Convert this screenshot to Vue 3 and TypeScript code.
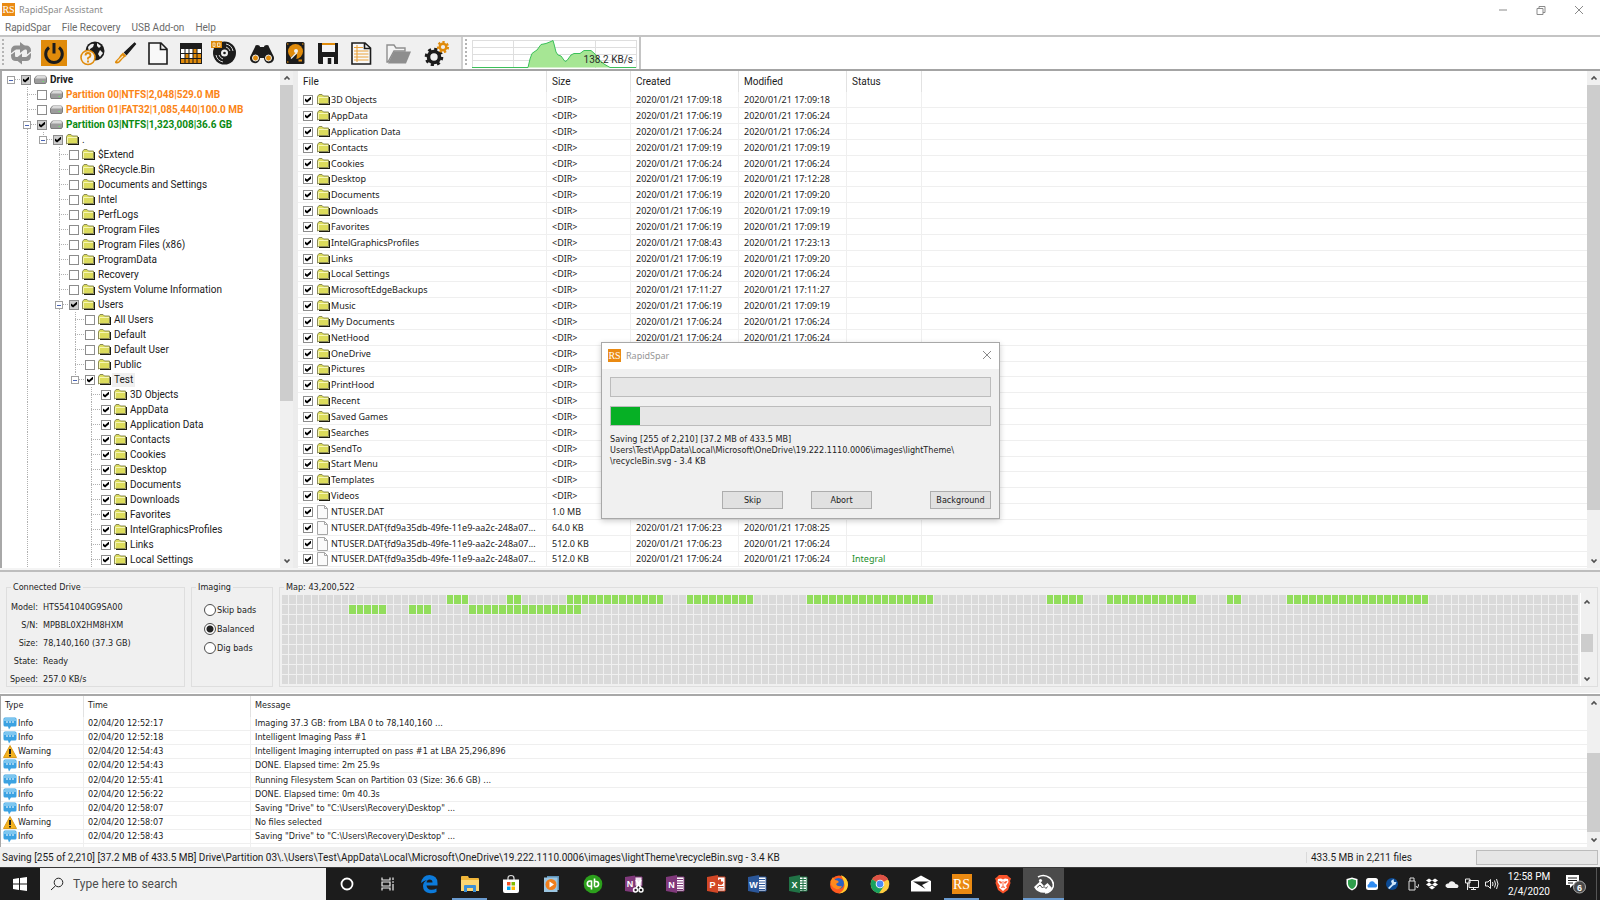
<script setup lang="ts">
import { h, ref, type FunctionalComponent } from 'vue'

interface TreeNode {
  level: number
  name: string
  state: 'on' | 'off' | 'part'
  open?: boolean
  last?: boolean
  tone?: 'drive' | 'pending' | 'done'
  current?: boolean
}

const leaf = (level: number, state: 'on' | 'off', names: string[]): TreeNode[] =>
  names.map((name) => ({ level, name, state }))

const tree = ref<TreeNode[]>([
  { level: 0, name: 'Drive', state: 'part', open: true, tone: 'drive' },
  { level: 1, name: 'Partition 00|NTFS|2,048|529.0 MB', state: 'off', tone: 'pending' },
  { level: 1, name: 'Partition 01|FAT32|1,085,440|100.0 MB', state: 'off', tone: 'pending' },
  { level: 1, name: 'Partition 03|NTFS|1,323,008|36.6 GB', state: 'part', open: true, tone: 'done' },
  { level: 2, name: '.', state: 'part', open: true, last: true },
  ...leaf(3, 'off', [
    '$Extend', '$Recycle.Bin', 'Documents and Settings', 'Intel', 'PerfLogs', 'Program Files',
    'Program Files (x86)', 'ProgramData', 'Recovery', 'System Volume Information',
  ]),
  { level: 3, name: 'Users', state: 'part', open: true },
  ...leaf(4, 'off', ['All Users', 'Default', 'Default User', 'Public']),
  { level: 4, name: 'Test', state: 'on', open: true, last: true, current: true },
  ...leaf(5, 'on', [
    '3D Objects', 'AppData', 'Application Data', 'Contacts', 'Cookies', 'Desktop', 'Documents',
    'Downloads', 'Favorites', 'IntelGraphicsProfiles', 'Links', 'Local Settings',
  ]),
])

interface FileRow {
  name: string
  size: string
  created: string
  modified: string
  status: string
}

const dir = (name: string, created: string, modified: string): FileRow => ({
  name, size: '<DIR>', created: `2020/01/21 ${created}`, modified: `2020/01/21 ${modified}`, status: '',
})
const longName = 'NTUSER.DAT{fd9a35db-49fe-11e9-aa2c-248a07...'
const files: FileRow[] = [
  dir('3D Objects', '17:09:18', '17:09:18'),
  dir('AppData', '17:06:19', '17:06:24'),
  dir('Application Data', '17:06:24', '17:06:24'),
  dir('Contacts', '17:09:19', '17:09:19'),
  dir('Cookies', '17:06:24', '17:06:24'),
  dir('Desktop', '17:06:19', '17:12:28'),
  dir('Documents', '17:06:19', '17:09:20'),
  dir('Downloads', '17:06:19', '17:09:19'),
  dir('Favorites', '17:06:19', '17:09:19'),
  dir('IntelGraphicsProfiles', '17:08:43', '17:23:13'),
  dir('Links', '17:06:19', '17:09:20'),
  dir('Local Settings', '17:06:24', '17:06:24'),
  dir('MicrosoftEdgeBackups', '17:11:27', '17:11:27'),
  dir('Music', '17:06:19', '17:09:19'),
  dir('My Documents', '17:06:24', '17:06:24'),
  dir('NetHood', '17:06:24', '17:06:24'),
  ...['OneDrive', 'Pictures', 'PrintHood', 'Recent', 'Saved Games', 'Searches', 'SendTo', 'Start Menu', 'Templates', 'Videos']
    .map((name) => ({ name, size: '<DIR>', created: '', modified: '', status: '' })),
  { name: 'NTUSER.DAT', size: '1.0 MB', created: '', modified: '', status: '' },
  { name: longName, size: '64.0 KB', created: '2020/01/21 17:06:23', modified: '2020/01/21 17:08:25', status: '' },
  { name: longName, size: '512.0 KB', created: '2020/01/21 17:06:23', modified: '2020/01/21 17:06:24', status: '' },
  { name: longName, size: '512.0 KB', created: '2020/01/21 17:06:24', modified: '2020/01/21 17:06:24', status: 'Integral' },
]

const driveInfo: [string, string][] = [
  ['Model:', 'HTS541040G9SA00'],
  ['S/N:', 'MPBBL0X2HM8HXM'],
  ['Size:', '78,140,160 (37.3 GB)'],
  ['State:', 'Ready'],
  ['Speed:', '257.0 KB/s'],
]

const modes = ['Skip bads', 'Balanced', 'Dig bads']
const mode = ref('Balanced')

const columns = 173
const runs: [number, number][][] = [
  [[22, 24], [30, 31], [38, 50], [54, 62], [70, 86], [102, 106], [110, 121], [126, 127], [134, 152]],
  [[9, 13], [17, 19], [25, 39]],
]
const cells = Array.from({ length: columns * 9 }, (_, i) => {
  const row = runs[Math.floor(i / columns)] ?? []
  const col = i % columns
  return row.some(([a, b]) => col >= a && col <= b)
})

const log: [string, string, string][] = [
  ['Info', '02/04/20 12:52:17', 'Imaging 37.3 GB: from LBA 0 to 78,140,160 ...'],
  ['Info', '02/04/20 12:52:18', 'Intelligent Imaging Pass #1'],
  ['Warning', '02/04/20 12:54:43', 'Intelligent Imaging interrupted on pass #1 at LBA 25,296,896'],
  ['Info', '02/04/20 12:54:43', 'DONE. Elapsed time: 2m 25.9s'],
  ['Info', '02/04/20 12:55:41', 'Running Filesystem Scan on Partition 03 (Size: 36.6 GB) ...'],
  ['Info', '02/04/20 12:56:22', 'DONE. Elapsed time: 0m 40.3s'],
  ['Info', '02/04/20 12:58:07', 'Saving "Drive" to "C:\\Users\\Recovery\\Desktop" ...'],
  ['Warning', '02/04/20 12:58:07', 'No files selected'],
  ['Info', '02/04/20 12:58:43', 'Saving "Drive" to "C:\\Users\\Recovery\\Desktop" ...'],
]

const office = [
  { letter: 'N', color: '#80397b', name: 'OneNote' },
  { letter: 'P', color: '#d24726', name: 'PowerPoint' },
  { letter: 'W', color: '#2b579a', name: 'Word' },
  { letter: 'X', color: '#217346', name: 'Excel' },
]

const Folder: FunctionalComponent = () =>
  h('svg', { class: 'g-folder', viewBox: '0 0 13 11', 'aria-hidden': 'true' }, [
    h('path', { d: 'M2 11V10H12V3H13V11Z', fill: '#1c1c10' }),
    h('path', { d: 'M.5 10V2.5L2 .5H5L6.5 2H11.5V9.5H1.5Z', fill: '#dcdc5c', stroke: '#8c8c58' }),
    h('path', { d: 'M1.5 9V3.5H11', fill: 'none', stroke: '#f6f6b4' }),
  ])

const Chevron: FunctionalComponent<{ up?: boolean }> = (p) =>
  h('svg', { class: 'g-chevron', viewBox: '0 0 8 8', 'aria-hidden': 'true' }, [
    h('path', { d: p.up ? 'M1.5 5.5L4 3L6.5 5.5' : 'M1.5 2.5L4 5L6.5 2.5', fill: 'none', stroke: '#505050', 'stroke-width': '1.7' }),
  ])

const ScrollBar: FunctionalComponent<{ before: number; thumb: number; after: number }> = (p) =>
  h('div', { class: 'g-scroll' }, [
    h('button', { type: 'button', 'aria-label': 'Scroll up' }, [h(Chevron, { up: true })]),
    h('div', { style: { flexGrow: p.before } }),
    h('div', { class: 'g-thumb', style: { flexGrow: p.thumb } }),
    h('div', { style: { flexGrow: p.after } }),
    h('button', { type: 'button', 'aria-label': 'Scroll down' }, [h(Chevron)]),
  ])
ScrollBar.props = ['before', 'thumb', 'after']
Chevron.props = { up: Boolean }
</script>

<template>
  <div class="desktop">
    <header class="title">
      <span class="logo">RS</span>
      <h1>RapidSpar Assistant</h1>
      <div class="controls">
        <button type="button" aria-label="Minimize"><svg viewBox="0 0 10 10"><path d="M1 5H9" /></svg></button>
        <button type="button" aria-label="Restore"><svg viewBox="0 0 10 10"><path d="M1 3.5H7V9.5H1ZM3 3.500V1.500H9V7.500H7" /></svg></button>
        <button type="button" aria-label="Close window"><svg viewBox="0 0 10 10"><path d="M1 1L9 9M9 1L1 9" /></svg></button>
      </div>
    </header>
    <nav class="menu">
      <button type="button">RapidSpar</button>
      <button type="button">File Recovery</button>
      <button type="button">USB Add-on</button>
      <button type="button">Help</button>
    </nav>

    <div class="toolbar">
      <div class="tools">
        <i class="grip"></i>
        <div class="group">
          <button type="button" aria-label="Reconnect">
            <svg viewBox="0 0 26 26"><g fill="none" stroke="#8e8e8e" stroke-width="4"><path d="M12 19H8Q5 19 5 15.500V11Q5 7.500 8 7.500H14" /><path d="M14 7.500H18Q21 7.500 21 11V15.500Q21 19 18 19H12" /></g><path d="M12 2L19 7.500L12 13ZM14 13.500L7 19L14 24.500Z" fill="#8e8e8e" /><path d="M3 14L7 11L9 14M17 13L19 15.500L23 12" fill="none" stroke="#f0f0f0" stroke-width="1.300" /></svg>
          </button>
          <button type="button" class="power" aria-label="Power">
            <svg viewBox="0 0 26 26"><path d="M8 7.500A8.300 8.300 0 1 0 18 7.500M13 3V13.500" fill="none" stroke="#1c1c1c" stroke-width="3" /></svg>
          </button>
        </div>
        <div class="group">
          <button type="button" aria-label="Diagnose">
            <svg viewBox="0 0 26 26"><circle cx="16" cy="11" r="9.500" fill="#1c1c1c" /><path d="M9 7Q12 3 15 4L14 7L11 9L10 12ZM18 3L22 6L20 8L18 6ZM21 10L24 13L21 17L19 14Z" fill="#f0f0f0" /><circle cx="9" cy="17.500" r="7" fill="#f0f0f0" stroke="#e08b0b" stroke-width="1.600" /><path d="M6.500 15.500Q6.500 13 9 13T11.500 15.500Q11.500 17 9 18V19.500M9 20.500V22.500" fill="none" stroke="#e08b0b" stroke-width="1.800" /></svg>
          </button>
          <button type="button" aria-label="Repair">
            <svg viewBox="0 0 26 26"><path d="M22.500 3L23.500 4L14.500 14.500L12.500 12.500Z" fill="#1c1c1c" stroke="#1c1c1c" stroke-width="1.200" /><path d="M11 12.500L14.500 16Q12.500 17 10.500 19Q7 24 4.500 23.500T3.500 21Q7 18 8.500 15Z" fill="#e08b0b" /><path d="M5.500 21.500L11 16" stroke="#f6e3c0" stroke-width="1.200" /></svg>
          </button>
          <button type="button" aria-label="New">
            <svg viewBox="0 0 26 26"><path d="M4 3H16L22 9V24H4ZM15.500 3V9.500H22" fill="#f8f8f8" stroke="#1c1c1c" stroke-width="1.600" /></svg>
          </button>
          <button type="button" aria-label="Map">
            <svg viewBox="0 0 26 26"><rect x="2" y="3" width="22" height="21" fill="#1c1c1c" /><path d="M3 9H23V23H3Z" fill="#fff" /><path d="M3 18H7V23H3ZM7 13H11V23H7ZM11 18H15V23H11ZM15 9H19V23H15ZM19 14H23V23H19Z" fill="#e08b0b" /><path d="M7 9V23M11 9V23M15 9V23M19 9V23M3 13.500H23M3 18.500H23" stroke="#1c1c1c" stroke-width="1" /></svg>
          </button>
          <button type="button" aria-label="Disc image">
            <svg viewBox="0 0 26 26"><circle cx="13.500" cy="13" r="11.500" fill="#1c1c1c" /><g fill="none" stroke="#d8d8d8" stroke-width="1"><path d="M15 4A9 9 0 0 1 22 11M15 7A6 6 0 0 1 19 11M12 22A9 9 0 0 1 5 15M12 19A6 6 0 0 1 8 15" /></g><circle cx="13.500" cy="13" r="3.500" fill="#f0f0f0" /><circle cx="13.500" cy="13" r="1.300" fill="#1c1c1c" /><rect x="0" y="1" width="11" height="7" fill="#e08b0b" /><path d="M2 3V6.500H4V3ZM6.500 3V6.500H9V3Z" fill="none" stroke="#f7dcb0" /></svg>
          </button>
        </div>
        <div class="group">
          <button type="button" aria-label="Find">
            <svg viewBox="0 0 26 26"><path d="M6 7Q6 5 8 5Q11 5 11 7H15Q15 5 18 5Q20 5 20 7L24.500 16A5 5 0 1 1 15 18H11A5 5 0 1 1 1.500 16Z" fill="#1c1c1c" /><circle cx="6.500" cy="18" r="3" fill="#e08b0b" stroke="#f0f0f0" /><circle cx="19.500" cy="18" r="3" fill="#e08b0b" stroke="#f0f0f0" /></svg>
          </button>
          <button type="button" aria-label="Disk">
            <svg viewBox="0 0 26 26"><rect x="4" y="2" width="18.500" height="22" rx="1.500" fill="#1c1c1c" /><circle cx="13.500" cy="11.500" r="7.500" fill="#e08b0b" /><circle cx="14" cy="11" r="2" fill="#f0f0f0" /><path d="M10 16L15 14L14.500 18.500Q12 21 8.500 19.500Z" fill="#1c1c1c" /><path d="M9 18.500L15 12.500" stroke="#f0f0f0" stroke-width="1.400" /><path d="M16.500 20.500H20" stroke="#e08b0b" stroke-width="2" /><g fill="#e08b0b"><circle cx="5.800" cy="4" r=".8" /><circle cx="20.800" cy="4" r=".8" /><circle cx="5.800" cy="22" r=".8" /></g></svg>
          </button>
          <button type="button" aria-label="Save">
            <svg viewBox="0 0 26 26"><path d="M3 3H23V24H4L3 23Z" fill="#1c1c1c" /><path d="M7 3H20V12H7ZM8 17H19V24H8Z" fill="#f4f4f4" /><path d="M7 4H20" stroke="#e08b0b" stroke-width="2" /><path d="M14.500 18V24" stroke="#1c1c1c" stroke-width="3.500" /></svg>
          </button>
          <button type="button" aria-label="Report">
            <svg viewBox="0 0 26 26"><path d="M4 3H17L22.500 8V24H4ZM16.500 3V8.500H22.500" fill="#f8f8f8" stroke="#1c1c1c" stroke-width="1.600" /><path d="M6 7.500H15M6 11H20.500M6 14H20.500M6 17H20.500M6 20H20.500M9 5V22" stroke="#eaa23a" stroke-width="1.100" /></svg>
          </button>
        </div>
        <div class="group">
          <button type="button" aria-label="Open">
            <svg viewBox="0 0 26 26"><path d="M1 5H8L10 8H19V11H8L2 22H1Z" fill="#f4f4f4" stroke="#8e8e8e" stroke-width="1.400" /><path d="M8 11.500H25L20 23.500H2Z" fill="#8e8e8e" /></svg>
          </button>
        </div>
        <div class="group">
          <button type="button" aria-label="Settings">
            <svg viewBox="0 0 26 26"><circle cx="10" cy="17" r="5.500" fill="none" stroke="#1c1c1c" stroke-width="3.600" /><circle cx="10" cy="17" r="7.800" fill="none" stroke="#1c1c1c" stroke-width="3" stroke-dasharray="3.060 3.060" /><circle cx="19" cy="7" r="3.300" fill="none" stroke="#e08b0b" stroke-width="2.400" /><circle cx="19" cy="7" r="5" fill="none" stroke="#e08b0b" stroke-width="2.200" stroke-dasharray="2.240 2.240" /></svg>
          </button>
        </div>
      </div>
      <div class="graph">
        <i class="grip"></i>
        <svg viewBox="0 0 165 30">
          <path d="M0 .5H164M0 7.500H164M0 14.500H164M0 20.500H164M41.500 0V28M123.500 0V28M164.500 0V28M.5 0V28" fill="none" stroke="#dedede" />
          <path d="M0 27.500H56L58 19L60 13.500L62 12L65 10L69 4.500L74 3.500L79 1.500L81 .5L82 4L84 12L86 15L89 16L93 21.500L95 20.500L99 15L102 13.500H108L112 10.500H119L123 14L127 20L132 24L138 27.500H164" fill="#a6e694" stroke="#3cc05a" />
          <text x="161" y="23" text-anchor="end">138.2 KB/s</text>
        </svg>
      </div>
    </div>

    <main class="work">
      <section class="tree" aria-label="Drive contents">
        <ul>
          <li v-for="(n, i) in tree" :key="i">
            <i v-for="k in n.level" :key="k" class="cell" :class="{ pass: k === 2 || k === 4 }"></i>
            <i class="cell" :class="{ elbow: n.level > 0, last: n.last, root: !n.level }"><b v-if="n.open"></b></i>
            <label :class="n.tone">
              <input type="checkbox" :checked="n.state !== 'off'" :class="{ part: n.state === 'part' }" />
              <svg v-if="n.tone" class="disk" viewBox="0 0 13 9" aria-hidden="true"><path d="M2.500 1H11.500L12.500 3V7L11.500 8.500H1L.5 7V3.500Z" fill="#9c9c9c" stroke="#6a6a6a" stroke-width=".8" /><path d="M3 1H11.500L12 3.500H1Z" fill="#dadada" /><path d="M8.500 6.500H10" stroke="#6fe06f" /></svg>
              <Folder v-else />
              <span :class="{ current: n.current }">{{ n.name }}</span>
            </label>
          </li>
        </ul>
        <ScrollBar :before="0" :thumb="315" :after="153" />
      </section>

      <section class="list">
        <div class="fill">
          <table>
            <colgroup><col class="c-file" /><col class="c-size" /><col class="c-date" /><col class="c-date" /><col class="c-status" /><col /></colgroup>
            <thead><tr><th>File</th><th>Size</th><th>Created</th><th>Modified</th><th>Status</th><th></th></tr></thead>
            <tbody>
              <tr v-for="(f, i) in files" :key="i">
                <td class="name">
                  <label>
                    <input type="checkbox" checked />
                    <Folder v-if="f.size === '<DIR>'" />
                    <svg v-else class="page" viewBox="0 0 12 14" aria-hidden="true"><path d="M.5 .5H7.500L10.500 3.500V13.500H.5ZM7.500 .5V3.500H10.500" fill="#fafafa" stroke="#a6a6a6" /></svg>
                    <span>{{ f.name }}</span>
                  </label>
                </td>
                <td>{{ f.size }}</td><td>{{ f.created }}</td><td>{{ f.modified }}</td><td class="ok">{{ f.status }}</td><td></td>
              </tr>
            </tbody>
          </table>
        </div>
        <ScrollBar :before="0" :thumb="424" :after="44" />
      </section>
    </main>

    <section class="status-pane">
      <fieldset class="info">
        <legend>Connected Drive</legend>
        <dl><template v-for="[k, v] in driveInfo" :key="k"><dt>{{ k }}</dt><dd>{{ v }}</dd></template></dl>
      </fieldset>
      <fieldset class="modes">
        <legend>Imaging</legend>
        <div class="options">
          <label v-for="m in modes" :key="m"><input v-model="mode" type="radio" name="imaging" :value="m" />{{ m }}</label>
        </div>
      </fieldset>
      <fieldset class="map">
        <legend>Map: 43,200,522</legend>
        <div class="map-row">
          <div class="blocks"><i v-for="(on, i) in cells" :key="i" :class="{ on }"></i></div>
          <ScrollBar :before="20" :thumb="14" :after="16" />
        </div>
      </fieldset>
    </section>

    <section class="log">
      <div class="fill">
        <table>
          <colgroup><col class="c-type" /><col class="c-time" /><col /></colgroup>
          <thead><tr><th>Type</th><th>Time</th><th>Message</th></tr></thead>
          <tbody>
            <tr v-for="([type, time, message], i) in log" :key="i">
              <td>
                <span class="kind">
                  <svg v-if="type === 'Info'" viewBox="0 0 14 13" aria-hidden="true"><path d="M2 .5H12Q13.500 .5 13.500 2V8Q13.500 9.500 12 9.500H8L6 12.500L5 9.500H2Q.5 9.500 .5 8V2Q.5 .5 2 .5Z" fill="#3ba2e2" /><path d="M2 1H12L13 2V4H1V2Z" fill="#7cc6f0" /><path d="M3 5H5M6 5H8M9 5H11" stroke="#fff" /></svg>
                  <svg v-else viewBox="0 0 14 13" aria-hidden="true"><path d="M7 .5L13.500 12.500H.5Z" fill="#f5b21e" stroke="#d99a1c" /><path d="M7 4V9M7 10V11.500" stroke="#222" stroke-width="2" /></svg>
                  {{ type }}
                </span>
              </td>
              <td>{{ time }}</td><td>{{ message }}</td>
            </tr>
            <tr class="rest"><td></td><td></td><td></td></tr>
          </tbody>
        </table>
      </div>
      <ScrollBar :before="44" :thumb="82" :after="1" />
    </section>

    <footer class="statusbar">
      <span class="path">Saving [255 of 2,210] [37.2 MB of 433.5 MB] Drive\Partition 03\.\Users\Test\AppData\Local\Microsoft\OneDrive\19.222.1110.0006\images\lightTheme\recycleBin.svg - 3.4 KB</span>
      <span class="total">433.5 MB in 2,211 files</span>
      <span class="slot"></span>
    </footer>

    <div class="taskbar">
      <button type="button" class="start" aria-label="Start"><svg viewBox="0 0 14 14"><path d="M0 2L6 1V6.500H0ZM7 1L14 0V6.500H7ZM0 7.500H6V13L0 12ZM7 7.500H14V14L7 13Z" fill="#fff" /></svg></button>
      <label class="search">
        <svg viewBox="0 0 14 14" aria-hidden="true"><circle cx="8.500" cy="5.500" r="4.300" /><path d="M5.500 8.800L1 13" /></svg>
        <input type="text" placeholder="Type here to search" aria-label="Search" />
      </label>
      <div class="apps">
        <button type="button" aria-label="Cortana"><svg viewBox="0 0 20 20"><circle cx="10" cy="10" r="5.500" fill="none" stroke="#fff" stroke-width="1.800" /></svg></button>
        <button type="button" aria-label="Task view"><svg viewBox="0 0 20 20"><path d="M4 3.500V6H12V3.500M4 16.500V14H12V16.500M4 8H12V12H4ZM15 3.500V6M15 10V16.500M14 8H16" fill="none" stroke="#f0f0f0" stroke-width="1.200" /></svg></button>
        <button type="button" aria-label="Edge"><svg viewBox="0 0 20 20"><path d="M2 9Q3.500 1 10.500 1Q18.500 1.500 18.500 9V11.500H7.500Q8 15.500 12 15.800Q15 16 17.500 14.500V18Q14.500 19.500 11 19.200Q4 18.500 4 12Q4 8 8 6Q5 6.500 2 9ZM7.500 8.500H13.500Q13.500 5.500 10.500 5.500Q8 5.500 7.500 8.500Z" fill="#0c7bdb" fill-rule="evenodd" /></svg></button>
        <button type="button" class="running" aria-label="File Explorer"><svg viewBox="0 0 20 20"><path d="M1 3Q1 2 2 2H8L9 4H18Q19 4 19 5V17H1Z" fill="#f0b63a" /><path d="M1 6H19V17H1Z" fill="#fcd673" /><path d="M4 18V12Q4 11 5 11H15Q16 11 16 12V18H13V14H7V18Z" fill="#3b8fd6" /></svg></button>
        <button type="button" aria-label="Store"><svg viewBox="0 0 20 20"><path d="M7 6V4Q7 1.500 10 1.500T13 4V6" fill="none" stroke="#ddd" stroke-width="1.200" /><path d="M2 5.500H18V17Q18 19 16 19H4Q2 19 2 17Z" fill="#fff" /><path d="M6 8H9.500V11.500H6Z" fill="#f25022" /><path d="M10.500 8H14V11.500H10.500Z" fill="#7fba00" /><path d="M6 12.500H9.500V16H6Z" fill="#00a4ef" /><path d="M10.500 12.500H14V16H10.500Z" fill="#ffb900" /></svg></button>
        <button type="button" aria-label="Media player"><svg viewBox="0 0 20 20"><path d="M5 2H17V16H5Z" fill="#5f93b8" /><path d="M2 3.500H15.500V18H2Z" fill="#9cc6e2" /><circle cx="9" cy="10.500" r="5.500" fill="#f07f1d" /><path d="M7.500 7.500L12 10.500L7.500 13.500Z" fill="#fff" /></svg></button>
        <button type="button" aria-label="QuickBooks"><svg viewBox="0 0 20 20"><circle cx="10" cy="10" r="9.300" fill="#2ca01c" /><g fill="none" stroke="#fff" stroke-width="1.600"><path d="M8.500 7H7A2.700 2.700 0 0 0 7 12.400H8.500V15.500V6.500M11.500 12.500V4.500V7.500H13A2.600 2.600 0 0 1 13 12.700H11.500" /></g></svg></button>
        <button type="button" aria-label="OneNote clipper"><svg viewBox="0 0 20 20"><path d="M1 3L11 1.500V18.500L1 17Z" fill="#80397b" /><path d="M11 3H18V12H11Z" fill="#f0e4ef" stroke="#80397b" /><path d="M12 6L17 14M17 6L12 14" stroke="#fff" stroke-width="1.800" /><g fill="none" stroke="#fff" stroke-width="1.400"><circle cx="11.500" cy="16" r="2" /><circle cx="17" cy="16" r="2" /></g><text x="6" y="13" class="letter">N</text></svg></button>
        <button v-for="o in office" :key="o.letter" type="button" :aria-label="o.name">
          <svg viewBox="0 0 20 20">
            <path d="M11 3H19V17H11Z" fill="#fff" :stroke="o.color" />
            <path v-if="o.letter === 'P'" d="M12 12.500H17.500M12 15H17.500M14.500 5.500A2.500 2.500 0 1 0 17 8H14.500Z" :stroke="o.color" :fill="o.color" />
            <path v-else d="M12 5.500H18M12 8H18M12 10.500H18M12 13H18M12 15.500H18" :stroke="o.color" />
            <path v-if="o.letter === 'X'" d="M15 3V17" :stroke="o.color" />
            <path d="M1 3L12 1V19L1 17Z" :fill="o.color" />
            <text x="6.500" y="13.500" class="letter">{{ o.letter }}</text>
          </svg>
        </button>
        <button type="button" aria-label="Firefox"><svg viewBox="0 0 20 20"><circle cx="10" cy="10.500" r="9" fill="#ff5a1f" /><path d="M12 1Q19 4 19 11Q18 19 10 19.500Q16 16 15.500 11Q15 6 12 1Z" fill="#ffcb2e" /><circle cx="9.500" cy="9.500" r="5.500" fill="#2a62c4" /><path d="M1.500 7Q3 5 4 3L6 6Q9 6 10 8L7 10Q8 13 13 12Q11 16 7 15Q1.500 13 1.500 7Z" fill="#ff8a1c" /></svg></button>
        <button type="button" aria-label="Chrome"><svg viewBox="0 0 20 20"><circle cx="10" cy="10" r="9.300" fill="#ffcd40" /><path d="M10 10L1.950 5.350A9.300 9.300 0 0 1 18.050 5.350Z" fill="#de5246" /><path d="M10 10L1.950 5.350A9.300 9.300 0 0 0 9 19.300L14 12Z" fill="#1aa15f" /><path d="M10 5.500H18.200A9.300 9.300 0 0 0 10 .7Z" fill="#de5246" /><circle cx="10" cy="10" r="4.300" fill="#fff" /><circle cx="10" cy="10" r="3.400" fill="#4c8bf5" /></svg></button>
        <button type="button" aria-label="Mail"><svg viewBox="0 0 20 20"><path d="M0 7L10 1.500L20 7V17.500H0Z" fill="#fff" /><path d="M2 7.500H18L11 11L14.500 15L8 11Z" fill="#1c1c1c" /></svg></button>
        <button type="button" class="running" aria-label="RapidSpar"><span class="logo big">RS</span></button>
        <button type="button" aria-label="Brave"><svg viewBox="0 0 20 20"><path d="M6 1H14L16 3L18 4.500L17 7L17.500 9L15 16L10 19.500L5 16L2.500 9L3 7L2 4.500L4 3Z" fill="#fb542b" /><path d="M5 5L8 4.500L10 5.500L12 4.500L15 5L15.500 8L13 12L14 13.500L10 17L6 13.500L7 12L4.500 8Z" fill="#fff" /><path d="M6 7.500L8.500 8L8 9.500ZM14 7.500L11.500 8L12 9.500ZM10 7V12M8 13.500L10 12.500L12 13.500" fill="#fb542b" stroke="#fb542b" stroke-width=".8" /></svg></button>
        <button type="button" class="running active" aria-label="Snip"><svg viewBox="0 0 20 20"><path d="M4 3Q10-.5 16 4Q20.500 8 19 13Q17 18.500 11 19" fill="none" stroke="#fff" stroke-width="1.600" /><circle cx="6.500" cy="6.500" r="1.600" fill="#fff" /><path d="M0 13L6 7.500L10 12L13.500 9L18 14Q16 18.800 10 18.800Q3 18.800 0 13Z" fill="#fff" /><path d="M3 13.500L6 11L8.500 14L10 12.500L12 14.500L13.500 12.500" fill="none" stroke="#4b4b4b" /></svg></button>
      </div>
      <div class="tray">
        <svg viewBox="0 0 14 14"><path d="M7 .5L12.500 2V7Q12 11.500 7 13.500Q2 11.500 1.500 7V2Z" fill="#fff" /><path d="M7 2L11 3.200V7Q10.500 10.500 7 12Q3.500 10.500 3 7V3.200Z" fill="#2f9e4c" /></svg>
        <svg viewBox="0 0 14 14"><rect x="1" y="1" width="12" height="12" rx="2.500" fill="#fff" /><path d="M3 10.500Q1.500 8 4 7Q4.500 4 7.500 4.300Q9.500 4.500 10 6.500Q12.500 7 12 9.500L11 10.500Z" fill="#2f8cf2" /></svg>
        <svg viewBox="0 0 14 14"><circle cx="7" cy="7" r="6" fill="#0b4a94" /><path d="M3 11L7 7L6 4L8.500 2L9 5L11.500 5L10.500 7.500L8 8.500L4.500 12Z" fill="#cfe6fa" /></svg>
        <svg viewBox="0 0 14 14"><path d="M5 4V1H9V4M4 4H10V13H4ZM11 9L12.500 11L14 7" fill="none" stroke="#ddd" /></svg>
        <svg viewBox="0 0 14 14"><path d="M4 1.500L7 3.500L4 5.500L1 3.500ZM10 1.500L13 3.500L10 5.500L7 3.500ZM4 5.500L7 7.500L4 9.500L1 7.500ZM10 5.500L13 7.500L10 9.500L7 7.500ZM7 8.500L10 10.500L7 12.500L4 10.500Z" fill="#fff" /></svg>
        <svg viewBox="0 0 14 14"><path d="M2.500 11Q0 10 .5 8Q1.500 6 3.500 6.500Q5 3.500 8 4.500Q10 5 10.500 7Q13.500 7 13.500 9.500L12.500 11Z" fill="#f0f0f0" /></svg>
        <svg viewBox="0 0 14 14"><path d="M4 3.500H13.500V10.500H4ZM6 12.500H11M8.500 10.500V12.500M.5 2H5V6H.5ZM2.500 6V13" fill="none" stroke="#eee" /></svg>
        <svg viewBox="0 0 14 14"><path d="M.5 5H3L5.500 2.500V11.500L3 9H.5ZM7.500 5Q8.500 7 7.500 9M9.500 3.500Q11.500 7 9.500 10.500M11.500 2Q14.500 7 11.500 12" fill="none" stroke="#eee" /></svg>
      </div>
      <time class="clock"><span>12:58 PM</span><span>2/4/2020</span></time>
      <button type="button" class="notes" aria-label="Notifications">
        <svg viewBox="0 0 20 20"><path d="M0 1H13V11H7L4 14V11H0Z" fill="#fff" /><path d="M2 4H11M2 6.500H11M2 9H7" stroke="#1c1c1c" /><circle cx="13.500" cy="13" r="6" fill="#4a4a4a" stroke="#aaa" /><text x="13.500" y="16.500" class="letter">6</text></svg>
      </button>
    </div>

    <div class="dialog" role="dialog" aria-labelledby="dlg">
      <div class="dialog-title">
        <span class="logo">RS</span><h2 id="dlg">RapidSpar</h2>
        <button type="button" aria-label="Close"><svg viewBox="0 0 10 10"><path d="M1 1L9 9M9 1L1 9" /></svg></button>
      </div>
      <div class="dialog-body">
        <div class="bar" role="progressbar" aria-label="File progress"></div>
        <div class="bar" role="progressbar" aria-label="Total progress"><i :style="{ width: '7.7%' }"></i></div>
        <p>Saving [255 of 2,210] [37.2 MB of 433.5 MB]<br />Users\Test\AppData\Local\Microsoft\OneDrive\19.222.1110.0006\images\lightTheme\<br />\recycleBin.svg - 3.4 KB</p>
        <div class="actions">
          <button type="button">Skip</button>
          <button type="button">Abort</button>
          <button type="button" class="far">Background</button>
        </div>
      </div>
    </div>
  </div>
</template>

<style>
html, body { margin: 0; }
.g-folder { width: 13px; height: 11px; flex: none; }
.g-chevron { width: 8px; height: 8px; }
.g-scroll { flex: none; width: 13px; display: flex; flex-direction: column; background: #f0f0f0; }
.g-scroll button { flex: none; height: 14px; padding: 0; border: 0; background: none; display: flex; align-items: center; justify-content: center; }
.g-thumb { background: #cdcdcd; }
</style>

<style scoped>
* { box-sizing: border-box; }
.desktop { position: relative; height: 100vh; display: flex; flex-direction: column; overflow: hidden; background: #fff; color: #1c1c1c; font: 10px "Roboto", "Open Sans", sans-serif; }
button { font: inherit; color: inherit; padding: 0; border: 0; background: none; }
h1, h2, p, ul, dl, dd { margin: 0; padding: 0; font-weight: 400; font-size: inherit; }
.logo { width: 13px; height: 13px; background: #ea8a12; color: #fff; font: 10px/14px "Liberation Serif", serif; text-align: center; }
.logo.big { width: 20px; height: 20px; font-size: 14px; line-height: 21px; }

.title { flex: none; height: 19px; display: flex; align-items: center; gap: 4px; padding-left: 2px; color: #8a8a8a; font: 9px "Noto Sans", sans-serif; }
.controls { margin-left: auto; padding-right: 2px; display: flex; }
.controls button { width: 38px; height: 16px; display: flex; align-items: center; justify-content: center; }
.controls svg, .dialog-title svg { width: 10px; height: 10px; fill: none; stroke: #8a8a8a; }
.menu { flex: none; height: 16px; display: flex; align-items: center; gap: 11px; padding-left: 5px; color: #6a6a6a; }

.toolbar { flex: none; height: 36px; display: flex; border-top: 2px solid #c4c4c4; border-bottom: 2px solid #a4a4a4; }
.tools { display: flex; align-items: center; gap: 12px; padding-right: 11px; background: #f0f0f0; border-right: 2px solid #d0d0d0; }
.grip { flex: none; width: 2px; height: 28px; margin: 0 -8px 0 2px; background: repeating-linear-gradient(#b4b4b4 0 2px, transparent 2px 4px); }
.group { display: flex; gap: 7px; }
.group button, .group svg { width: 26px; height: 26px; display: block; }
.group .power { background: #e08b0b; }
.graph { display: flex; align-items: center; padding-right: 2px; border-right: 2px solid #c4c4c4; }
.graph .grip { margin: 0 5px 0 2px; }
.graph svg { width: 165px; height: 30px; margin-top: 3px; }
.graph text { font: 10px "Roboto", sans-serif; fill: #2a2a2a; }

.work { flex: 1; min-height: 0; display: flex; border-bottom: 2px solid #f4f4f4; }
.tree { flex: none; width: 298px; display: flex; border-left: 2px solid #a8a8a8; border-right: 5px solid #ececec; background: #fff; }
.tree ul { flex: 1; min-width: 0; overflow: hidden; list-style: none; padding: 1px 0 0 1px; }
.tree li { display: flex; height: 15px; }
.cell { position: relative; flex: none; width: 16px; height: 15px; }
.pass, .elbow { background: repeating-linear-gradient(#b0b0b0 0 1px, transparent 1px 2px) 8px 0 / 1px 100% no-repeat; }
.elbow.last { background-size: 1px 8px; }
.elbow::after, .root::after { content: ""; position: absolute; left: 8px; top: 7px; width: 9px; height: 1px; background: repeating-linear-gradient(90deg, #b0b0b0 0 1px, transparent 1px 2px); }
.cell b { position: absolute; z-index: 1; left: 4px; top: 4px; width: 8px; height: 8px; border: 1px solid #a0a0a0; background: linear-gradient(#4a64b4, #4a64b4) center / 4px 1px no-repeat #fff; }
label { display: flex; align-items: center; }
.tree label { padding-left: 2px; }
input[type="checkbox"] { appearance: none; flex: none; width: 10px; height: 10px; margin: 0 4px 0 0; border: 1px solid #8c8c8c; background: #fff; position: relative; }
.tree input[type="checkbox"] { margin-right: 3px; }
input.part { background: #cecece; }
input[type="checkbox"]:checked::after { content: ""; position: absolute; inset: 1px; background: #000; clip-path: polygon(0 35%, 35% 60%, 100% 0, 100% 45%, 35% 100%, 0 75%); }
.disk { width: 13px; height: 9px; flex: none; }
.tree label span { padding: 0 2px; margin-left: 1px; line-height: 14px; white-space: nowrap; }
.drive span, .pending span, .done span { font-weight: 700; }
.pending span { color: #fb8416; }
.done span { color: #0b8a12; }
.tree .current { background: #f0f0f0; }

.list, .log { display: flex; min-width: 0; background: #fff; }
.list { flex: 1; }
.fill { flex: 1; min-width: 0; overflow: hidden; }
table { width: 100%; table-layout: fixed; border-collapse: separate; border-spacing: 0; }
th, td { padding: 0 0 0 5px; text-align: left; font-weight: 400; white-space: nowrap; overflow: hidden; border-right: 1px solid #efefef; border-bottom: 1px solid #efefef; }
th { border-right-color: #e2e2e2; border-bottom: 0; }
th:last-child, td:last-child { border-right: 0; }
.c-file { width: 249px; } .c-size { width: 84px; } .c-date { width: 108px; } .c-status { width: 75px; }
.list th { height: 21px; padding-bottom: 1px; }
.list td { height: 16px; font: 9px/14px "Noto Sans", sans-serif; }
.list tr:nth-child(6n) td { height: 15px; }
.list label { height: 14px; }
.list .g-folder { margin-right: 1px; }
.page { width: 12px; height: 14px; margin-right: 2px; flex: none; }
.list .ok { color: #1d8f2a; }

.status-pane { flex: none; display: flex; gap: 6px; height: 124px; padding: 10px 2px 6px 6px; border-top: 2px solid #bdbdbd; border-bottom: 1px solid #fff; background: #f0f0f0; font: 9px "DejaVu Sans Condensed", "DejaVu Sans", sans-serif; }
fieldset { margin: 0; min-width: 0; padding: 0; border: 1px solid #dedede; }
legend { height: 11px; margin-left: 4px; padding: 0 2px; line-height: 11px; }
.info { width: 179px; }
.info dl { display: grid; grid-template-columns: 31px 1fr; column-gap: 5px; row-gap: 4px; padding-top: 7px; line-height: 14px; }
.info dt { text-align: right; white-space: nowrap; }
.modes { width: 82px; }
.options { padding: 5px 0 0 12px; }
.modes label { height: 13px; margin: 5px 0 6px; gap: 1px; }
input[type="radio"] { appearance: none; width: 12px; height: 12px; margin: 0; border: 1px solid #4c4c4c; border-radius: 50%; background: #fff; }
input[type="radio"]:checked { background: radial-gradient(#222 0 3px, #fff 4px); }
.map { flex: 1; }
.map-row { display: flex; gap: 2px; padding: 0 4px 0 2px; }
.blocks { flex: 1; display: grid; grid-template-columns: repeat(173, 1fr); grid-auto-rows: 9px; gap: 1px; padding-top: 2px; }
.blocks i { background: #dadada; }
.blocks .on { background: #92dd5c; }
.map .g-scroll { border-left: 1px solid #fff; padding-top: 2px; margin-bottom: -2px; }

.log { flex: none; height: 153px; border-top: 2px solid #a8a8a8; border-left: 1px solid #a8a8a8; font: 9px "DejaVu Sans Condensed", "DejaVu Sans", sans-serif; }
.c-type { width: 83px; } .c-time { width: 167px; }
.log th { height: 21px; padding: 0 0 4px 4px; }
.log td { height: 14px; line-height: 13px; padding-left: 4px; }
.log tr:nth-child(5n) td { height: 15px; }
.log td:first-child { padding-left: 2px; }
.log .rest td { height: 4px; line-height: 3px; border-bottom: 0; }
.kind { display: flex; align-items: center; gap: 1px; height: 13px; }
.kind svg { width: 14px; height: 13px; flex: none; }

.statusbar { flex: none; height: 20px; display: flex; align-items: center; background: #f0f0f0; }
.path { flex: 1; padding-left: 2px; white-space: nowrap; overflow: hidden; }
.total { width: 170px; padding-left: 4px; border-left: 1px solid #dadada; }
.slot { width: 122px; height: 15px; margin-right: 2px; border: 1px solid #bcbcbc; background: #e6e6e6; }

.taskbar { flex: none; height: 33px; display: flex; align-items: stretch; background: #1c1c1c; color: #fff; border-top: 1px solid #3a3a3a; }
.start { width: 40px; display: flex; align-items: center; justify-content: center; }
.start svg { width: 14px; height: 14px; }
.search { width: 286px; background: #f2f2f2; padding-left: 10px; gap: 9px; }
.search svg { width: 14px; height: 14px; fill: none; stroke: #222; }
.search input { flex: 1; min-width: 0; border: 0; padding: 0; background: none; outline: 0; font: 12px "Roboto", sans-serif; }
.search input::placeholder { color: #4c4c4c; opacity: 1; }
.apps { display: flex; }
.apps button { position: relative; width: 41px; display: flex; align-items: center; justify-content: center; }
.apps svg { width: 20px; height: 20px; }
.letter { font: 700 9px "Liberation Sans", sans-serif; fill: #fff; text-anchor: middle; }
.running::after { content: ""; position: absolute; left: 3px; right: 3px; bottom: 0; height: 2px; background: #6a9bd0; }
.apps .active { background: #4b4b4b; }
.active::after { left: 0; right: 0; }
.tray { margin-left: auto; display: flex; align-items: center; gap: 6px; }
.tray svg { width: 14px; height: 14px; }
.clock { width: 60px; display: flex; flex-direction: column; justify-content: center; text-align: center; font: 10px/15px "Roboto", sans-serif; }
.notes { width: 38px; margin-right: 3px; padding-right: 3px; border-right: 1px solid #555; display: flex; align-items: center; justify-content: center; }
.notes svg { width: 20px; height: 20px; }

.dialog { position: absolute; left: 601px; top: 342px; width: 399px; border: 1px solid #a8a8a8; background: #f0f0f0; box-shadow: 0 2px 6px rgb(0 0 0 / 20%); font: 9px "DejaVu Sans Condensed", "DejaVu Sans", sans-serif; }
.dialog-title { height: 26px; display: flex; align-items: center; gap: 5px; padding: 0 7px 2px 6px; background: #fff; color: #969696; font: 9px "Noto Sans", sans-serif; }
.dialog-title button { margin-left: auto; height: 10px; }
.dialog-body { padding: 8px 8px 9px; }
.bar { height: 20px; margin-bottom: 9px; border: 1px solid #bcbcbc; background: #e6e6e6; }
.bar + .bar { margin-bottom: 8px; }
.bar i { display: block; height: 100%; background: #06b025; }
.dialog p { height: 57px; line-height: 11px; white-space: nowrap; }
.actions { display: flex; gap: 28px; padding: 0 0 0 112px; }
.actions button { width: 61px; height: 18px; border: 1px solid #adadad; background: #e1e1e1; }
.actions .far { margin-left: auto; }
</style>
